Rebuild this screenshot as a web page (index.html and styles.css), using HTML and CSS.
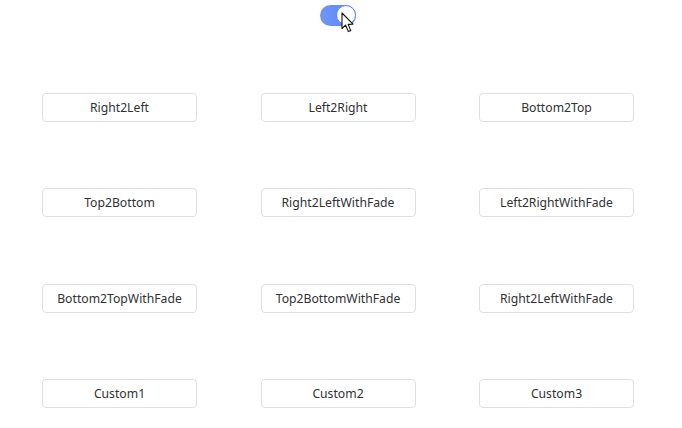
FILE: index.html
```html
<!DOCTYPE html>
<html lang="en">
  <head>
    <meta charset="UTF-8" />
    <title>Transition Demo</title>
    <link rel="stylesheet" href="styles.css">
  </head>
  <body>
    <div class="toolbar">
      <div class="switch">
        <span class="switch-knob"></span>
        <svg class="cursor" width="14" height="22" viewBox="0 0 14 22">
          <path d="M1 1 L1 16.5 L4.6 13.2 L7.4 19.6 L9.8 18.6 L7.1 12.4 L12 12.1 Z" fill="#fff" stroke="#111" stroke-width="1.1" stroke-linejoin="round" />
        </svg>
      </div>
    </div>

    <div class="grid">
      <button class="btn">Right2Left</button>
      <button class="btn">Left2Right</button>
      <button class="btn">Bottom2Top</button>
      <button class="btn">Top2Bottom</button>
      <button class="btn">Right2LeftWithFade</button>
      <button class="btn">Left2RightWithFade</button>
      <button class="btn">Bottom2TopWithFade</button>
      <button class="btn">Top2BottomWithFade</button>
      <button class="btn">Right2LeftWithFade</button>
      <button class="btn">Custom1</button>
      <button class="btn">Custom2</button>
      <button class="btn">Custom3</button>
    </div>
  </body>
</html>
```

FILE: styles.css
```css
body {
  margin: 0;
  font-family: "Noto Sans", "Open Sans", sans-serif;
  background: #fff;
  color: #333;
}

.toolbar {
  display: flex;
  justify-content: center;
  padding: 5px 6px 0 0;
  height: 88px;
  box-sizing: border-box;
}

.switch {
  position: relative;
  width: 36px;
  height: 21px;
  border-radius: 11px;
  background: linear-gradient(90deg, #6f95f7 0%, #5a86f5 100%);
}

.switch-knob {
  position: absolute;
  right: 0;
  top: 0;
  width: 18px;
  height: 18px;
  border-radius: 50%;
  background: #fff;
  border: 1.5px solid #5a86f5;
}

.cursor {
  position: absolute;
  left: 21px;
  top: 7px;
}

.grid {
  display: grid;
  grid-template-columns: repeat(3, 155px);
  column-gap: 63.5px;
  row-gap: 66.3px;
  padding-left: 42px;
  padding-top: 5px;
}

.btn {
  height: 29px;
  background: #fff;
  border: 1px solid #dcdfe6;
  border-radius: 4px;
  font-family: inherit;
  font-size: 12.2px;
  color: #303133;
  padding: 0;
  cursor: pointer;
}
```
